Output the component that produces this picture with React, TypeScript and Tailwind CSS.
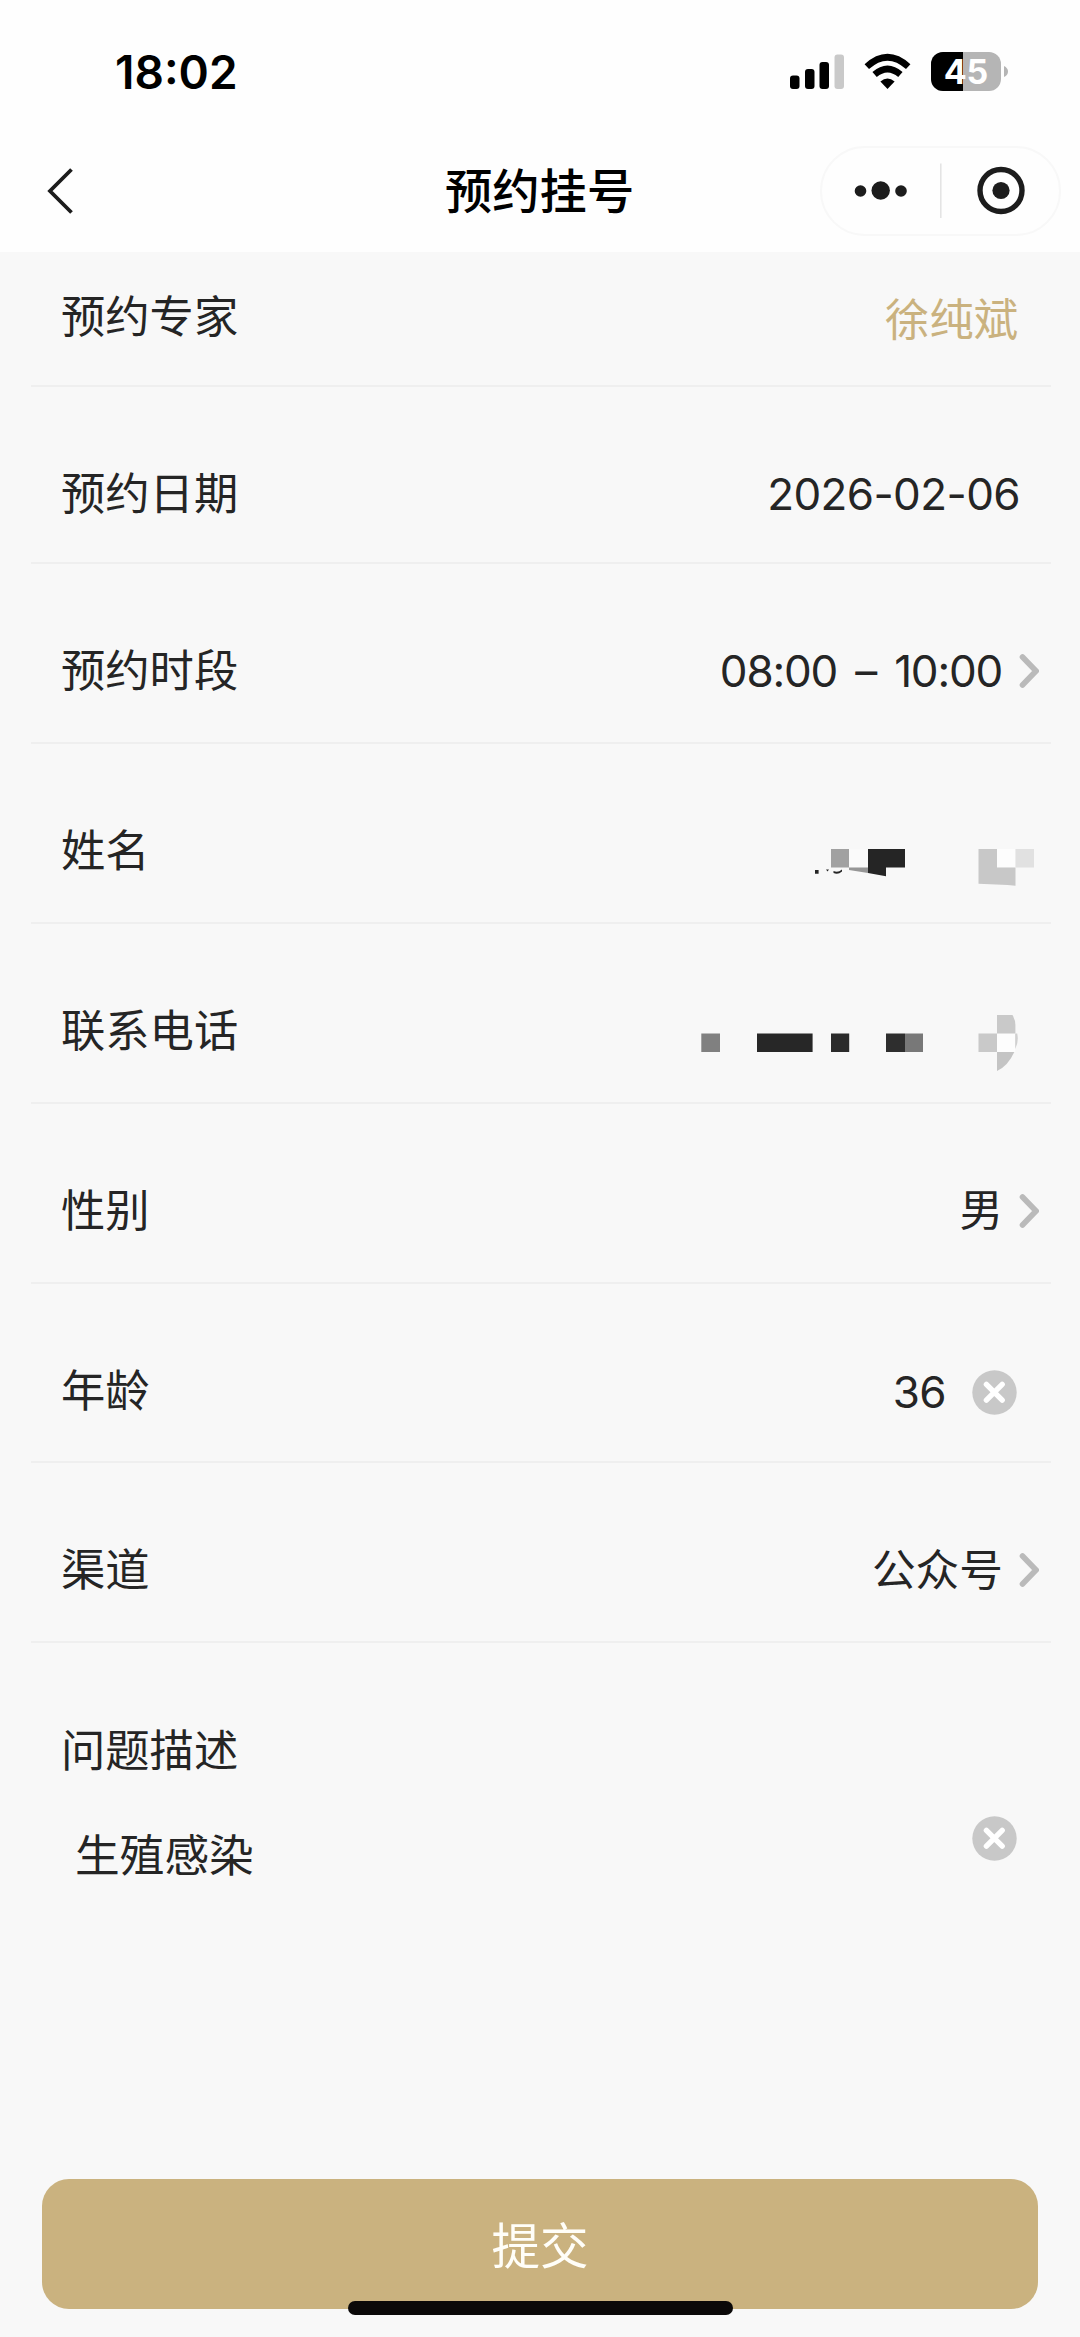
import React from "react";

const TEXT_FONT = "font-['Inter','Noto_Sans_CJK_SC',sans-serif]";
const CJK_FONT = "font-['Noto_Sans_CJK_SC',sans-serif]";

interface RowProps {
  label: string;
  className: string;
  children: React.ReactNode;
}

function StatusBar() {
  return (
    <div className="flex h-[140px] items-start justify-between pl-[115px] pr-[72px]">
      <span className="mt-[44px] text-[46px] font-semibold leading-[56px] text-black">18:02</span>
      <div className="mt-[52px] flex h-[39px]">
        {/* Signal */}
        <svg width="54" height="39" viewBox="0 0 54 39" className="mr-[20px]">
          <rect x="0" y="23.5" width="9.5" height="13.5" rx="3" fill="#000" />
          <rect x="15" y="17" width="9.5" height="20" rx="3" fill="#000" />
          <rect x="29.5" y="10" width="9.5" height="27" rx="3" fill="#000" />
          <rect x="44.5" y="2.5" width="9.5" height="34.5" rx="3" fill="#c9c9c9" />
        </svg>
        {/* Wifi */}
        <svg width="48" height="39" viewBox="0 0 48 39" className="mr-[19px]">
          <path d="M23.5 37 L16.4 29.6 Q23.5 23.4 30.6 29.6 Z" fill="#000" />
          <path d="M10.6 22.6 Q23.5 11.4 36.4 22.6" fill="none" stroke="#000" strokeWidth="6.6" />
          <path d="M2.8 14.6 Q23.5 -4.2 44.2 14.6" fill="none" stroke="#000" strokeWidth="6.6" />
        </svg>
        {/* Battery */}
        <div className="relative flex h-[39px] w-[70px] items-center justify-center overflow-hidden rounded-[12px] bg-[#b5b5b5]">
          <div className="absolute inset-y-0 left-0 w-[32px] bg-black" />
          <span className="relative text-[34px] font-bold leading-[39px] text-white">45</span>
        </div>
        <svg width="7" height="39" viewBox="0 0 7 39">
          <path d="M3 14 Q7 16 7 19.5 Q7 23 3 25 Z" fill="#b5b5b5" />
        </svg>
      </div>
    </div>
  );
}

function NavBar() {
  return (
    <div className="flex h-[112px] pr-[19px] pl-[46px]">
      <svg width="30" height="50" viewBox="0 0 30 50" className="mt-[26px]">
        <path d="M25.5 3.5 L4 25 L25.5 46.5" fill="none" stroke="#1c1c1c" strokeWidth="3.8" />
      </svg>
      <h1
        className={`mt-[18px] ml-[369px] w-[190px] whitespace-nowrap text-[47.3px] font-medium leading-[62px] text-black ${CJK_FONT}`}
      >
        预约挂号
      </h1>
      <div className="mt-[6px] ml-auto flex h-[90px] w-[241px] items-center rounded-full border-2 border-[#f8f8f8]">
        <svg width="237" height="86" viewBox="0 0 237 86">
          <circle cx="38.5" cy="43" r="5.8" fill="#1c1c1c" />
          <circle cx="58.7" cy="42.5" r="9.2" fill="#1c1c1c" />
          <circle cx="79" cy="43" r="5.8" fill="#1c1c1c" />
          <path d="M118.8 15.5 V70" stroke="#e4e4e4" strokeWidth="1.6" />
          <circle cx="179" cy="42.5" r="21" fill="none" stroke="#1c1c1c" strokeWidth="5.4" />
          <circle cx="179" cy="42.5" r="8.6" fill="#1c1c1c" />
        </svg>
      </div>
    </div>
  );
}

function Chevron() {
  return (
    <svg width="20" height="36" viewBox="0 0 20 36" className="ml-[17px] shrink-0">
      <path
        d="M3.5 4 L17 18 L3.5 32"
        fill="none"
        stroke="#bababa"
        strokeWidth="5.6"
        strokeLinecap="round"
      />
    </svg>
  );
}

function ClearIcon() {
  return (
    <svg width="45" height="45" viewBox="0 0 45 45" className="shrink-0">
      <circle cx="22.5" cy="22.5" r="22.2" fill="#c8c8c8" />
      <path
        d="M14.4 14.4 L30.2 30.2 M30.2 14.4 L14.4 30.2"
        stroke="#fff"
        strokeWidth="5.4"
        strokeLinecap="round"
      />
    </svg>
  );
}

// Censored name, only blocks of it are left
function MaskedName() {
  return (
    <svg width="226" height="60" viewBox="810 821 226 60" className="shrink-0 overflow-visible">
      <path d="M997 849 h18.5 v18.5 h-18.5 z" fill="#fdfdfd" />
      <path d="M849 849 h19 v18.5 h-19 z" fill="#fafafa" />
      <path d="M831 849 h18 v18.5 h-18 z" fill="#a1a1a1" />
      <path d="M849 867.5 h19 v5.5 l-19 -3 z" fill="#969696" />
      <path d="M868 849 h37 v18.5 h-19 v8.7 l-18 -3.2 z" fill="#252525" />
      <path d="M815 870 h3.6 v3.8 h-3.6 z M826 869.5 h3 l-1.5 2 z" fill="#252525" />
      <path d="M833.5 871 Q838 873 842 869.5 V871.5 Q838 875 833.5 873 Z" fill="#252525" />
      <path d="M978.5 849 h18.5 v18.5 h18.5 v18.3 l-8 -0.8 l-29 -1.2 z" fill="#c8c8c8" />
      <path d="M1015.5 849 h18.5 v18.5 h-18.5 z" fill="#e1e1e1" />
    </svg>
  );
}

function MaskedPhone() {
  return (
    <svg width="336" height="60" viewBox="700 1001 336 60" className="shrink-0 overflow-visible">
      <path d="M701.3 1033.5 h18.7 v18.5 h-18.7 z" fill="#808080" />
      <path d="M757 1033.5 h55.6 v18.5 h-55.6 z" fill="#272727" />
      <path d="M831 1033.5 h18.2 v18.5 h-18.2 z" fill="#2b2b2b" />
      <path d="M886 1033.5 h19 v18.5 h-19 z" fill="#2e2e2e" />
      <path d="M905 1033.5 h18 v18.5 h-18 z" fill="#787878" />
      <path d="M978.5 1033.5 h18.5 v18.5 h-18.5 z" fill="#c9c9c9" />
      <path d="M997 1033.5 h18.2 v18.5 h-18.2 z" fill="#fdfdfd" />
      <path d="M997 1015 h15.5 Q1015.4 1020 1015.4 1025 V1033.5 H997 z" fill="#c9c9c9" />
      <path d="M1015.2 1033.5 h2 Q1019 1041 1015.2 1049 z" fill="#d0d0d0" />
      <path d="M997 1052 h17.3 Q1008 1066 997 1071 z" fill="#c4c4c4" />
    </svg>
  );
}

function Row({ label, className, children }: RowProps) {
  return (
    <div
      className={`mr-[29px] ml-[31px] flex items-end justify-between border-b-2 border-[#efefef] pl-[30px] ${className}`}
    >
      <span className={`text-[44.3px] leading-[60px] ${CJK_FONT}`}>{label}</span>
      <div className="flex h-[54px] items-center">{children}</div>
    </div>
  );
}

export default function App() {
  return (
    <div
      className={`flex h-[2337px] w-[1080px] flex-col overflow-hidden bg-[#f8f8f8] text-[#252525] ${TEXT_FONT}`}
    >
      <header className="h-[252px] shrink-0 bg-[#fefefe]">
        <StatusBar />
        <NavBar />
      </header>

      <main className="flex-1">
        <Row label="预约专家" className="h-[135px] pb-[41px]">
          <span className={`mr-[33px] text-[44.3px] leading-[60px] text-[#cab27f] ${CJK_FONT}`}>
            徐纯斌
          </span>
        </Row>
        <Row label="预约日期" className="h-[177px] pb-[41px]">
          <span className="mr-[31px] text-[44px] leading-[60px] tracking-[-0.6px]">2026-02-06</span>
        </Row>
        <Row label="预约时段" className="h-[180px] pb-[44px]">
          <span className="text-[44px] leading-[60px] tracking-[-1.2px] [word-spacing:7px]">
            08:00 – 10:00
          </span>
          <Chevron />
          <i className="w-[12px]" />
        </Row>
        <Row label="姓名" className="h-[180px] pb-[44px]">
          <MaskedName />
          <i className="w-[15px]" />
        </Row>
        <Row label="联系电话" className="h-[180px] pb-[44px]">
          <MaskedPhone />
          <i className="w-[15px]" />
        </Row>
        <Row label="性别" className="h-[180px] pb-[44px]">
          <span className={`-mr-px mb-[6px] text-[43.5px] leading-[60px] ${CJK_FONT}`}>男</span>
          <Chevron />
          <i className="w-[12px]" />
        </Row>
        <Row label="年龄" className="h-[179px] pb-[43px]">
          <span className="mt-[2px] mr-[26px] text-[44px] leading-[60px] tracking-[-0.6px]">36</span>
          <div className="mt-[2px]">
            <ClearIcon />
          </div>
          <i className="w-[34px]" />
        </Row>
        <Row label="渠道" className="h-[180px] pb-[44px]">
          <span className={`-mr-px mb-[6px] text-[43.7px] leading-[60px] ${CJK_FONT}`}>公众号</span>
          <Chevron />
          <i className="w-[12px]" />
        </Row>

        {/* Description */}
        <div className={`pt-[75px] pr-[63px] pl-[61px] ${CJK_FONT}`}>
          <p className="text-[44.3px] leading-[60px]">问题描述</p>
          <div className="mt-[38px] flex items-start justify-between pl-[14px]">
            <p className="mt-[7px] text-[44.7px] leading-[60px]">生殖感染</p>
            <ClearIcon />
          </div>
        </div>
      </main>

      <footer className="relative h-[158px] shrink-0 px-[42px]">
        <button
          className={`h-[130px] w-full rounded-[27px] bg-[#cab27f] pb-[2px] text-[48.5px] leading-[60px] text-[#fffef8] ${CJK_FONT}`}
        >
          提交
        </button>
        <div className="absolute top-[122px] left-[348px] h-[14px] w-[385px] rounded-full bg-[#0b0909]" />
      </footer>
    </div>
  );
}
